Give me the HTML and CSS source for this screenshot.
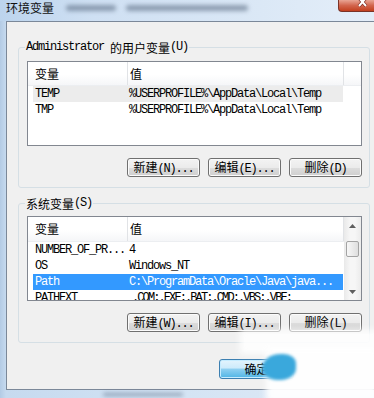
FILE: index.html
```html
<!DOCTYPE html>
<html lang="zh-CN">
<head>
  <meta charset="UTF-8" />
  <meta name="viewport" content="width=device-width, initial-scale=1.0" />
  <title>环境变量</title>
  <link rel="stylesheet" href="styles.css">
</head>
<body>
  <div class="window">
    <div class="titlebar">
      <span class="title">环境变量</span>
      <span class="ghost ghost-a"></span>
      <span class="ghost ghost-b"></span>
      <div class="close-btn">
        <svg width="36" height="12" viewBox="0 0 36 12">
          <path d="M20 -2 L27 6 M27 -2 L20 6" stroke="#7a2a20" stroke-width="3.4" fill="none" />
          <path d="M20 -2 L27 6 M27 -2 L20 6" stroke="#fff" stroke-width="2" fill="none" />
        </svg>
      </div>
    </div>

    <div class="client">
      <fieldset class="group group-user">
        <legend><span class="mono">Administrator </span>的用户变量<span class="mono">(U)</span></legend>
        <div class="list">
          <div class="list-body">
            <div class="list-head">
              <div class="head-name">变量</div>
              <div class="head-value">值</div>
              <div class="head-fill"></div>
            </div>
            <div class="row inactive">
              <span class="cell-name">TEMP</span>
              <span class="cell-value">%USERPROFILE%\AppData\Local\Temp</span>
            </div>
            <div class="row">
              <span class="cell-name">TMP</span>
              <span class="cell-value">%USERPROFILE%\AppData\Local\Temp</span>
            </div>
          </div>
        </div>
        <div class="buttons">
          <button class="btn">新建<span class="mono">(N)...</span></button>
          <button class="btn">编辑<span class="mono">(E)...</span></button>
          <button class="btn">删除<span class="mono">(D)</span></button>
        </div>
      </fieldset>

      <fieldset class="group group-sys">
        <legend>系统变量<span class="mono">(S)</span></legend>
        <div class="list">
          <div class="list-body">
            <div class="list-head tall">
              <div class="head-name">变量</div>
              <div class="head-value">值</div>
              <div class="head-fill"></div>
            </div>
            <div class="row">
              <span class="cell-name">NUMBER_OF_PR...</span>
              <span class="cell-value">4</span>
            </div>
            <div class="row">
              <span class="cell-name">OS</span>
              <span class="cell-value">Windows_NT</span>
            </div>
            <div class="row active">
              <span class="cell-name">Path</span>
              <span class="cell-value">C:\ProgramData\Oracle\Java\java...</span>
            </div>
            <div class="row">
              <span class="cell-name">PATHEXT</span>
              <span class="cell-value tight">.COM;.EXE;.BAT;.CMD;.VBS;.VBE;</span>
            </div>
          </div>
          <div class="scrollbar">
            <div class="sb-arrow">
              <svg width="7" height="4" viewBox="0 0 7 4"><path d="M0 4 L3.5 0 L7 4 Z" fill="#5f5f5f" /></svg>
            </div>
            <div class="sb-thumb"></div>
            <div class="sb-track"></div>
            <div class="sb-arrow">
              <svg width="7" height="4" viewBox="0 0 7 4"><path d="M0 0 L3.5 4 L7 0 Z" fill="#5f5f5f" /></svg>
            </div>
          </div>
        </div>
        <div class="buttons">
          <button class="btn">新建<span class="mono">(W)...</span></button>
          <button class="btn">编辑<span class="mono">(I)...</span></button>
          <button class="btn">删除<span class="mono">(L)</span></button>
        </div>
      </fieldset>

      <div class="footer">
        <button class="btn btn-default">确定</button>
      </div>
    </div>

    <div class="frame-bottom"><span class="ghost ghost-c"></span></div>

    <!-- watermark smudge over the lower right corner -->
    <div class="wm wm-top"></div>
    <div class="wm wm-bottom"></div>
    <div class="wm-bird"></div>
  </div>
</body>
</html>
```

FILE: styles.css
```css
* {
  box-sizing: border-box;
}

body {
  margin: 0;
  font-family: "Noto Sans CJK SC", "Liberation Sans", sans-serif;
  font-size: 12px;
  color: #000;
  overflow: hidden;
}

.window {
  position: relative;
  width: 374px;
  height: 398px;
  overflow: hidden;
  background: linear-gradient(to right, #b3cbe5 0, #c6daef 6px, #d4e4f4 50%, #dfeaf7 100%);
}

.titlebar {
  display: flex;
  align-items: flex-start;
  height: 21px;
  padding-left: 6px;
  background: linear-gradient(to right, #bcd4ed 0, #cfe0f3 25%, #dbe8f6 70%, #e4eef9 100%);
}

.title {
  height: 15px;
  line-height: 15px;
  font-size: 12px;
  color: #111;
}

.ghost {
  height: 6px;
  margin-top: 5px;
  background: rgba(70, 88, 112, 0.5);
  filter: blur(2px);
  border-radius: 3px;
}

.ghost-a {
  width: 50px;
  margin-left: 12px;
}

.ghost-b {
  width: 122px;
  margin-left: 10px;
}

.close-btn {
  margin-left: auto;
  width: 36px;
  height: 12px;
  border: 1px solid #7b3327;
  border-top: none;
  border-right: none;
  border-radius: 0 0 0 4px;
  background: linear-gradient(#e9a594, #d2654d 50%, #c2401f 100%);
  line-height: 0;
}

.client {
  margin-left: 6px;
  height: 369px;
  border: 1px solid #7b8899;
  border-right: none;
  background: #f0f0f0;
}

.group {
  width: 352px;
  margin: 0 0 0 11px;
  padding: 7px 7px 10px 8px;
  border: 1px solid #d5dfe5;
  border-radius: 3px;
  min-inline-size: 0;
}

.group-user {
  margin-top: 18px;
}

.group-sys {
  margin-top: 8px;
  padding-top: 6px;
}

legend {
  display: flex;
  align-items: center;
  height: 14px;
  margin-left: -2px;
  padding: 0 1px;
  font-size: 12px;
  white-space: pre;
}

.mono {
  font-family: "Liberation Mono", monospace;
  letter-spacing: -1.2px;
}

.list {
  display: flex;
  height: 85px;
  border: 1px solid #828790;
  background: #fff;
  overflow: hidden;
}

.list-body {
  flex: 1;
  min-width: 0;
}

.list-head {
  display: flex;
  height: 24px;
  line-height: 23px;
  background: linear-gradient(#fff 0%, #fff 55%, #f5f6f8 100%);
  border-bottom: 1px solid #eceef1;
}

.list-head.tall {
  height: 25px;
}

.head-name {
  width: 99px;
  padding-left: 7px;
}

.head-value {
  width: 216px;
  padding-left: 2px;
  border-left: 1px solid #e1e3e6;
}

.head-fill {
  flex: 1;
  border-left: 1px solid #e1e3e6;
}

.row {
  display: flex;
  width: 310px;
  height: 16px;
  margin-left: 5px;
  line-height: 16px;
  font-family: "Liberation Mono", monospace;
  letter-spacing: -1.2px;
  white-space: nowrap;
}

.row.inactive {
  background: #ececec;
}

.row.active {
  background: #3399ff;
  color: #fff;
}

.cell-name {
  width: 94px;
  padding-left: 2px;
  overflow: hidden;
}

.cell-value {
  width: 216px;
  padding-left: 2px;
  overflow: hidden;
}

.cell-value.tight {
  letter-spacing: -1.9px;
  padding-left: 5px;
}

.scrollbar {
  display: flex;
  flex-direction: column;
  width: 17px;
  background: linear-gradient(to right, #e9e9e9, #f6f6f6 35%, #f6f6f6 65%, #ebebeb);
}

.sb-arrow {
  display: flex;
  align-items: center;
  justify-content: center;
  height: 17px;
}

.sb-thumb {
  height: 16px;
  margin: 7px 2px 0;
  border: 1px solid #a3a3a3;
  border-radius: 2px;
  background: linear-gradient(to right, #f7f7f7, #dedede);
}

.sb-track {
  flex: 1;
}

.buttons {
  display: flex;
  justify-content: flex-end;
  gap: 8px;
  margin-top: 12px;
}

.btn {
  width: 73px;
  height: 19px;
  padding: 0;
  border: 1px solid #707070;
  border-radius: 3px;
  background: linear-gradient(#f3f3f3, #ebebeb 50%, #dddddd 50%, #cfcfcf);
  box-shadow: inset 0 0 0 1px #fbfbfb;
  font-family: "Noto Sans CJK SC", sans-serif;
  font-size: 12px;
  line-height: 16px;
  color: #000;
}

.footer {
  display: flex;
  margin: 16px 0 0 212px;
}

.btn-default {
  width: 75px;
  height: 20px;
  border-color: #3c7fb1;
  background: linear-gradient(#e3f4fd, #cdebfb 45%, #8fd0f1 50%, #4fb5e6);
  box-shadow: inset 0 0 0 1px #c5ecff;
}

.frame-bottom {
  display: flex;
  height: 8px;
}

.ghost-c {
  width: 80px;
  height: 3px;
  margin: 3px 0 0 103px;
}

.wm {
  position: absolute;
  background: #fff;
  filter: blur(3px);
}

.wm-top {
  left: 240px;
  top: 330px;
  width: 140px;
  height: 24px;
  opacity: 0.9;
}

.wm-bottom {
  left: 266px;
  top: 348px;
  width: 112px;
  height: 54px;
  opacity: 0.95;
}

.wm-bird {
  position: absolute;
  left: 262px;
  top: 354px;
  width: 34px;
  height: 26px;
  border-radius: 60% 40% 50% 50%;
  background: #3aa8dc;
  filter: blur(1.5px);
}
```
